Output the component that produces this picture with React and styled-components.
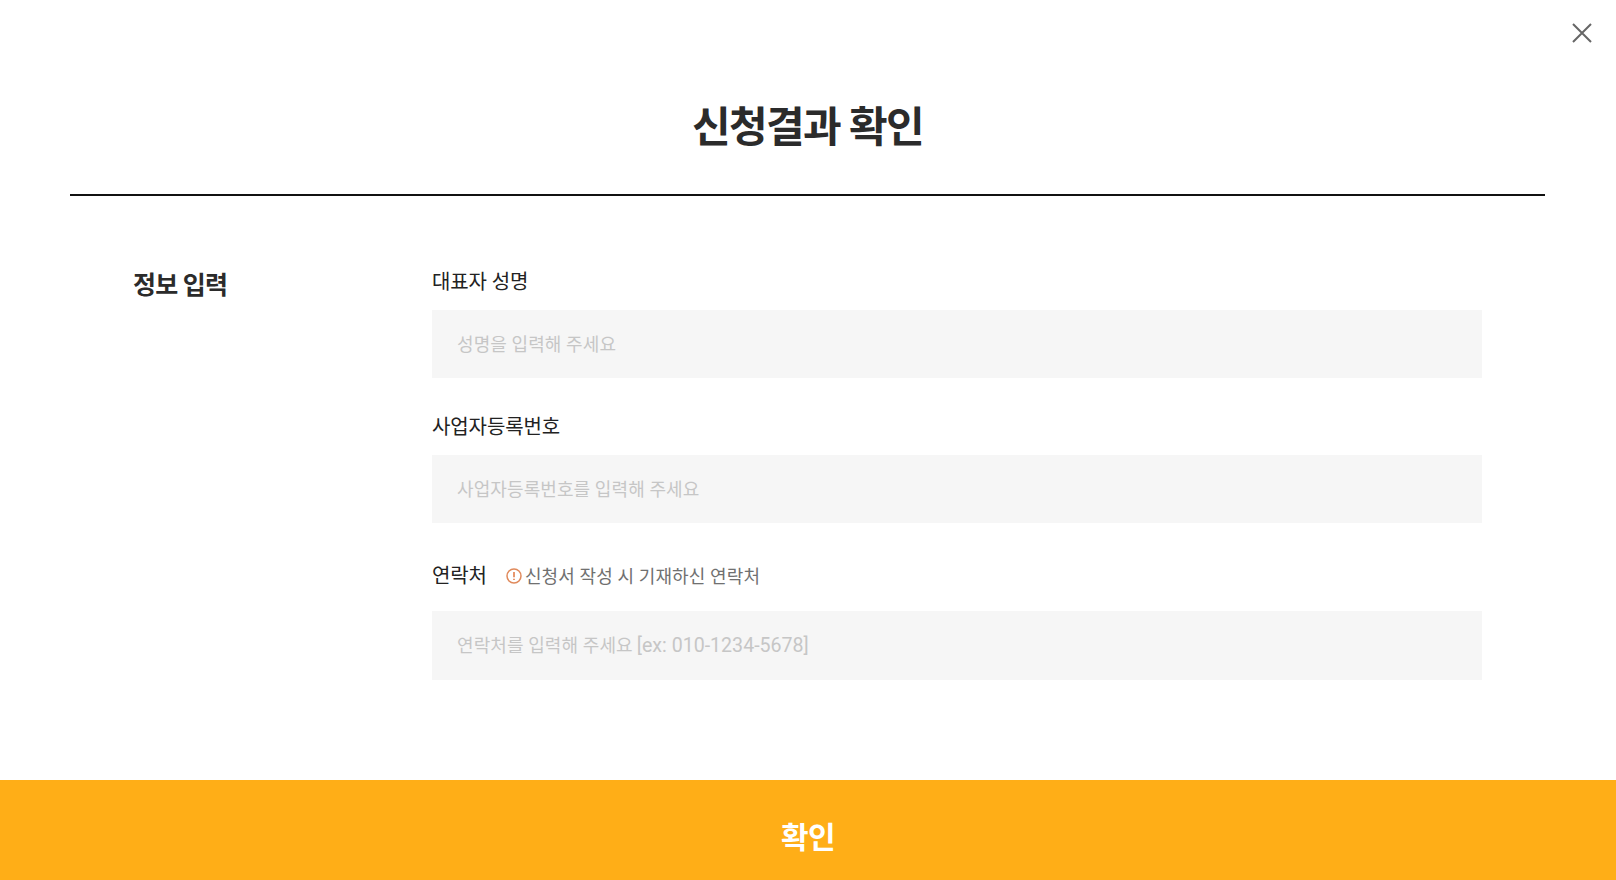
import React from "react";
import styled, { createGlobalStyle } from "styled-components";

const FONT = `Roboto, "Noto Sans CJK KR", "Noto Sans", sans-serif`;

const Global = createGlobalStyle`
  html, body { margin: 0; padding: 0; background: #fff; }
  body { font-family: ${FONT}; color: #222; overflow: hidden; }
  * { box-sizing: border-box; }
`;

const Page = styled.div`
  position: relative;
  width: 1616px;
  height: 880px;
  display: flex;
  flex-direction: column;
  background: #fff;
`;

const CloseButton = styled.button`
  position: absolute;
  top: 22px;
  right: 23px;
  width: 22px;
  height: 22px;
  padding: 0;
  border: 0;
  background: none;
  cursor: pointer;
  display: block;
`;

const Main = styled.main`
  flex: 1;
  padding: 0 71px 0 70px;
`;

const Header = styled.header`
  height: 196px;
  padding-top: 98px;
  border-bottom: 2px solid #111;
  text-align: center;
`;

const Title = styled.h1`
  margin: 0;
  font-size: 42px;
  line-height: 60px;
  font-weight: 700;
  letter-spacing: -1.6px;
  color: #2b2b2b;
`;

const Section = styled.section`
  display: grid;
  grid-template-columns: 362px 1050px;
  padding: 71px 0 0 0;
`;

const SectionTitle = styled.h2`
  margin: 0;
  padding: 1px 0 0 63px;
  font-size: 25px;
  line-height: 36px;
  font-weight: 700;
  letter-spacing: -0.8px;
  color: #2b2b2b;
`;

const Fields = styled.div`
  display: flex;
  flex-direction: column;
  gap: 34px;
`;

const Field = styled.div`
  display: flex;
  flex-direction: column;
`;

const LabelRow = styled.div`
  display: flex;
  align-items: center;
  margin-bottom: ${(p) => p.$mb}px;
`;

const Label = styled.div`
  font-size: 20px;
  line-height: 30px;
  font-weight: 400;
  letter-spacing: -0.1px;
  color: #222;
`;

const Note = styled.div`
  display: flex;
  align-items: center;
  margin-left: 19px;
  padding-top: 2px;
  font-size: 18px;
  line-height: 35px;
  letter-spacing: 0.12px;
  color: #707070;
`;

const NoteIcon = styled.svg`
  width: 16px;
  height: 16px;
  margin: -2px 3px 0 0;
  flex: none;
`;

const InputBox = styled.div`
  height: ${(p) => p.$h}px;
  padding: 0 25px;
  background: #f6f6f6;
  font-size: 18px;
  line-height: 69px;
  letter-spacing: 0.1px;
  color: #c6c6c6;
`;

const Latin = styled.span`
  font-size: 19.6px;
  letter-spacing: 0;
  margin-left: 4px;
`;

const Submit = styled.button`
  height: 100px;
  padding: 10px 0 0;
  border: 0;
  background: #ffae17;
  color: #fff;
  font-family: ${FONT};
  font-size: 30px;
  font-weight: 700;
  letter-spacing: -0.5px;
  cursor: pointer;
`;

export default function App() {
  return (
    <Page>
      <Global />
      <CloseButton aria-label="닫기">
        <svg width="22" height="22" viewBox="0 0 22 22" fill="none" stroke="#666" strokeWidth="2">
          <path d="M2 2 L20 20 M20 2 L2 20" />
        </svg>
      </CloseButton>
      <Main>
        <Header>
          <Title>신청결과 확인</Title>
        </Header>
        <Section>
          <SectionTitle>정보 입력</SectionTitle>
          <Fields>
            <Field>
              <LabelRow $mb={13}>
                <Label>대표자 성명</Label>
              </LabelRow>
              <InputBox $h={68}>성명을 입력해 주세요</InputBox>
            </Field>
            <Field>
              <LabelRow $mb={13}>
                <Label>사업자등록번호</Label>
              </LabelRow>
              <InputBox $h={68}>사업자등록번호를 입력해 주세요</InputBox>
            </Field>
            <Field>
              <LabelRow $mb={17}>
                <Label>연락처</Label>
                <Note>
                  <NoteIcon viewBox="0 0 16 16" fill="none">
                    <circle cx="8" cy="8" r="7" stroke="#e08a5c" strokeWidth="1.5" />
                    <path d="M8 4 V9.2 M8 10.8 V12" stroke="#e0763f" strokeWidth="1.5" />
                  </NoteIcon>
                  신청서 작성 시 기재하신 연락처
                </Note>
              </LabelRow>
              <InputBox $h={69}>
                연락처를 입력해 주세요<Latin>[ex: 010-1234-5678]</Latin>
              </InputBox>
            </Field>
          </Fields>
        </Section>
      </Main>
      <Submit>확인</Submit>
    </Page>
  );
}
